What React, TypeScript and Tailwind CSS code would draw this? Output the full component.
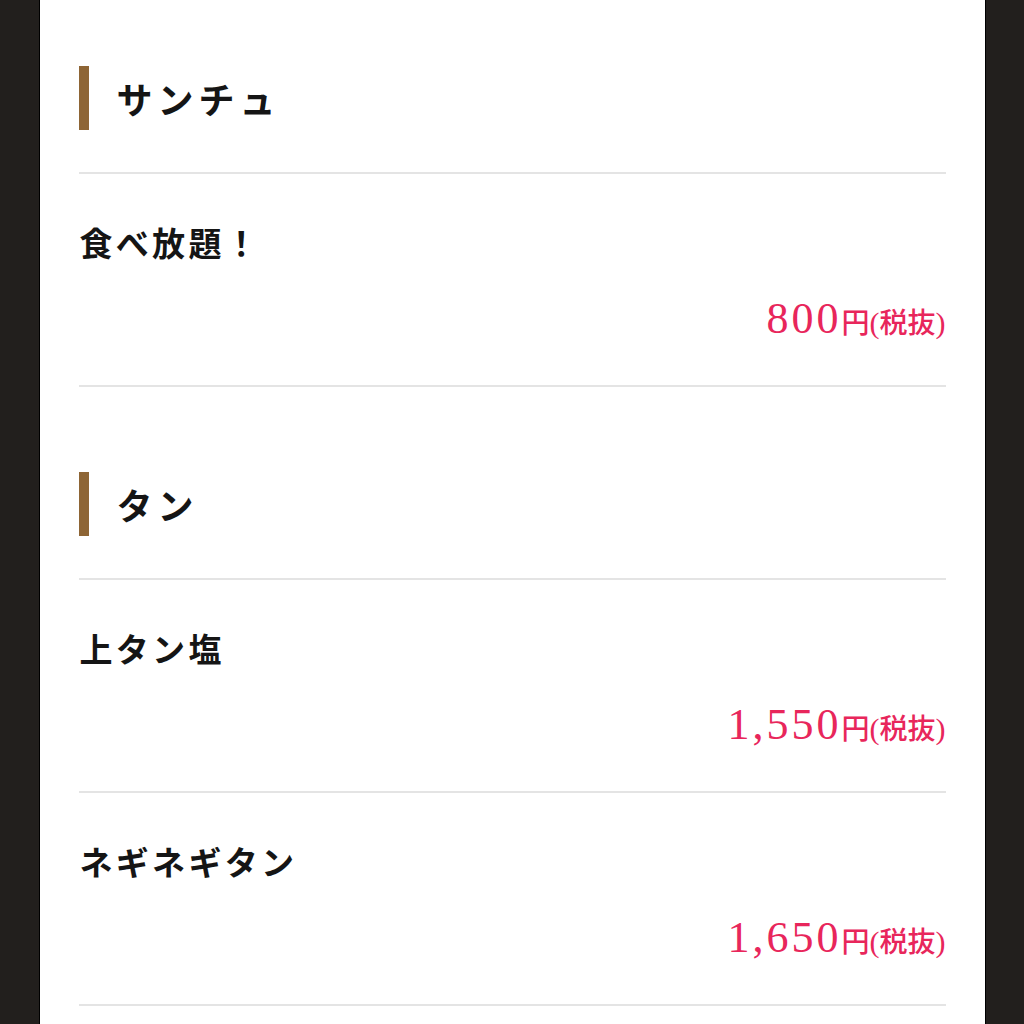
import React from 'react';

type Item = { name: string; price: string };
type Section = { title: string; items: Item[] };

const sections: Section[] = [
    { title: 'サンチュ', items: [{ name: '食べ放題！', price: '800' }] },
    {
        title: 'タン',
        items: [
            { name: '上タン塩', price: '1,550' },
            { name: 'ネギネギタン', price: '1,650' },
        ],
    },
];

const jp = { fontFamily: '"Noto Sans CJK JP", sans-serif' };
const num = { fontFamily: '"Liberation Serif", "Noto Sans CJK JP", serif' };

function MenuItem({ item }: { item: Item }) {
    return (
        <div className="border-b-2 border-[#e4e4e4] pt-[44px] pb-[42px]">
            <p className="text-[33px] leading-[48px] font-bold text-[#151515] tracking-[0.1em] pl-[1px]" style={jp}>
                {item.name}
            </p>
            <p className="mt-[29px] h-[48px] flex items-baseline justify-end text-[#e8265b]">
                <span className="text-[44px] leading-[48px] tracking-[3px]" style={num}>{item.price}</span>
                <span className="text-[28px] font-medium" style={jp}>円</span>
                <span className="text-[30px]" style={num}>(</span>
                <span className="text-[28px] font-medium" style={jp}>税抜</span>
                <span className="text-[30px]" style={num}>)</span>
            </p>
        </div>
    );
}

export default function App() {
    return (
        <div className="min-h-screen bg-[#221f1d] flex justify-center">
            <div className="w-[947px] bg-white border-x border-black px-[39px] pt-[66px]">
                {sections.map((section, i) => (
                    <section key={section.title} className={i > 0 ? 'mt-[85px]' : ''}>
                        <div className="flex items-center h-[64px] border-l-[10px] border-[#8e6535] pl-[28px]">
                            <h2 className="text-[36px] font-bold text-[#151515] tracking-[0.14em]" style={jp}>
                                {section.title}
                            </h2>
                        </div>
                        <div className="mt-[42px] border-t-2 border-[#e4e4e4]">
                            {section.items.map((item) => (
                                <MenuItem key={item.name} item={item} />
                            ))}
                        </div>
                    </section>
                ))}
            </div>
        </div>
    );
}
